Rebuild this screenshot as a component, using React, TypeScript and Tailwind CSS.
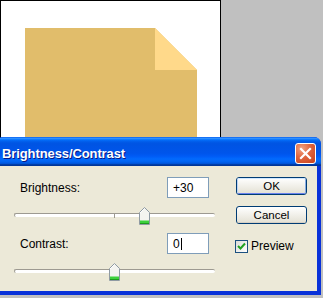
// Brightness/Contrast dialog over a canvas (XP look)

const FONT = '"Liberation Sans", Arial, sans-serif';

function Thumb({ value }: { value: number }) {
  // value -100..100 mapped on a 200px track
  const left = 100 + value - 5.5;
  return (
    <svg
      className="absolute top-0"
      style={{ left }}
      width="11"
      height="18"
      viewBox="0 0 11 18"
    >
      <path d="M5.5 0.5 L10.5 5.5 V17.5 H0.5 V5.5 Z" fill="#f4f4f0" stroke="#8f9aa3" />
      <path d="M1 6 L5.5 1.5" stroke="#ffffff" />
      <rect x="1" y="13.5" width="9" height="3.5" fill="#3dd13d" />
      <rect x="1" y="16" width="9" height="1" fill="#1e9b1e" />
    </svg>
  );
}

function Slider({ value, tick }: { value: number; tick?: boolean }) {
  return (
    <div className="relative h-[18px] w-[201px]">
      <div className="absolute left-0 top-[6px] h-[4px] w-[201px] rounded-[2px] border-t border-l border-[#9d9a91] bg-white" />
      {tick && <div className="absolute left-[100px] top-[6px] h-[5px] w-px bg-[#9d9a91]" />}
      <Thumb value={value} />
    </div>
  );
}

function Field({ label, value, caret }: { label: string; value: string; caret?: boolean }) {
  return (
    <div className="flex h-[21px] items-center justify-between pl-[6px] pr-[5px]">
      <span className="text-[12px] leading-[14px] text-black">{label}</span>
      <div className="flex h-[21px] w-[42px] items-center border border-[#7f9db9] bg-white pl-[5px] text-[12px] leading-[14px] text-black">
        {value}
        {caret && <span className="ml-px inline-block h-[12px] w-px bg-black" />}
      </div>
    </div>
  );
}

function XpButton({ label, primary }: { label: string; primary?: boolean }) {
  return (
    <div className="h-[18px] w-[71px] rounded-[3px] border border-[#003c74] bg-gradient-to-b from-white to-[#e3e0d3] p-0">
      <div
        className={
          primary
            ? 'flex h-full w-full items-center justify-center rounded-[2px] border border-t-[#cee7ff] border-l-[#bcd4f6] border-b-[#6982ee] border-r-[#89ade4] text-[11.5px] leading-[12px] text-black'
            : 'flex h-full w-full items-center justify-center rounded-[2px] border-b border-b-[#d6d0c5] text-[11.5px] leading-[12px] text-black'
        }
      >
        {label}
      </div>
    </div>
  );
}

export default function App() {
  return (
    <div className="relative h-[298px] w-[323px] overflow-hidden bg-[#c0c0c0]" style={{ fontFamily: FONT }}>
      {/* canvas */}
      <div className="h-[140px] w-[221px] border-l border-r border-t border-black bg-white">
        <svg width="219" height="139" viewBox="0 0 219 139">
          <polygon points="24,27 154,27 196,69 196,139 24,139" fill="#e1bd6b" />
          <polygon points="154,27 196,69 154,69" fill="#ffd98a" />
        </svg>
      </div>

      {/* dialog window */}
      <div className="absolute left-[-4px] top-[137px] flex h-[158px] w-[325px] flex-col overflow-hidden rounded-t-[7px] bg-[#0831d9]">
        <div className="flex h-[29px] shrink-0 items-start justify-between bg-[linear-gradient(to_bottom,#0058ee_0%,#3593ff_4%,#288eff_6%,#127dff_8%,#036ffc_10%,#0262ee_14%,#0057e5_20%,#0054e3_24%,#0055eb_56%,#005bf5_66%,#026afe_76%,#0062ef_86%,#0052d6_92%,#0040ab_94%,#003092_100%)] pl-[6px] pr-[5px]">
          <span className="mt-[10px] text-[13px] font-bold leading-[14px] tracking-[-0.1px] text-white [text-shadow:1px_1px_0_#0a1883]">
            Brightness/Contrast
          </span>
          <div className="mt-[6px] flex h-[21px] w-[21px] items-center justify-center rounded-[3px] border border-white bg-[radial-gradient(circle_at_30%_25%,#f0a383_0%,#e0653e_45%,#c6401a_100%)]">
            <svg width="13" height="13" viewBox="0 0 13 13">
              <path d="M2 2 L11 11 M11 2 L2 11" stroke="#ffffff" strokeWidth="2.2" strokeLinecap="square" />
            </svg>
          </div>
        </div>

        <div className="mx-[4px] mb-[4px] flex flex-1 bg-[#ece9d8]">
          <div className="flex w-[214px] flex-col pl-[14px] pt-[11px]">
            <Field label="Brightness:" value="+30" />
            <div className="mt-[9px]">
              <Slider value={30} tick />
            </div>
            <div className="mt-[8px]">
              <Field label="Contrast:" value="0" caret />
            </div>
            <div className="mt-[9px]">
              <Slider value={0} />
            </div>
          </div>

          <div className="ml-[22px] flex flex-col pt-[11px]">
            <XpButton label="OK" primary />
            <div className="mt-[11px]">
              <XpButton label="Cancel" />
            </div>
            <div className="ml-[-1px] mt-[15px] flex items-center">
              <div className="flex h-[13px] w-[13px] items-center justify-center border border-[#1c5180] bg-gradient-to-br from-[#dcdcd7] to-white">
                <svg width="9" height="9" viewBox="0 0 9 9">
                  <path d="M1 4 L3.5 6.5 L8 1.5" stroke="#21a121" strokeWidth="2" fill="none" />
                </svg>
              </div>
              <span className="ml-[3px] text-[12px] leading-[14px] text-black">Preview</span>
            </div>
          </div>
        </div>
      </div>
    </div>
  );
}
